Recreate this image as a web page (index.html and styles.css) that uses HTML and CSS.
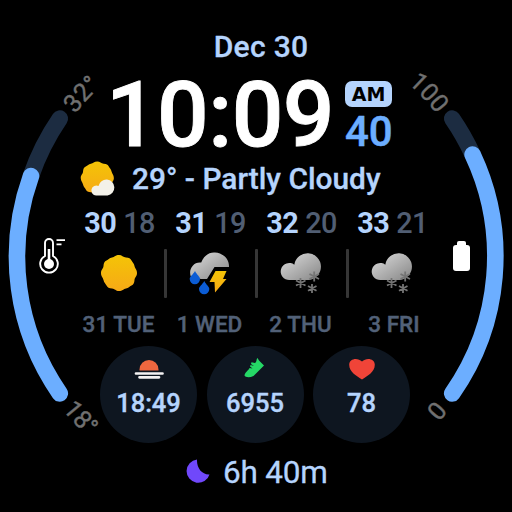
FILE: index.html
```html
<!DOCTYPE html>
<html lang="en">
<head>
<meta charset="utf-8">
<title>Watch face</title>
<link rel="stylesheet" href="styles.css">
</head>
<body>
<main class="face">
  <svg class="dial" viewBox="0 0 512 512">
    <defs>
      <path id="topLeft" d="M26 256A230 230 0 0 1 256 26"/>
      <path id="topRight" d="M256 26A230 230 0 0 1 486 256"/>
      <path id="bottomLeft" d="M9 256A247 247 0 0 0 256 503"/>
      <path id="bottomRight" d="M256 503A247 247 0 0 0 503 256"/>
    </defs>
    <path class="track" d="M59.8 118.6A239.5 239.5 0 0 0 31 175.8"/>
    <path class="level" d="M31 176A239.5 239.5 0 0 0 59.8 393.4"/>
    <path class="track" d="M452.2 118.6A239.5 239.5 0 0 1 472.6 154.5"/>
    <path class="level" d="M472.6 154.5A239.5 239.5 0 0 1 452.2 393.4"/>
    <text class="scale"><textPath href="#topLeft" startOffset="153">32°</textPath></text>
    <text class="scale"><textPath href="#topRight" startOffset="166">100</textPath></text>
    <text class="scale"><textPath href="#bottomLeft" startOffset="165.500">18°</textPath></text>
    <text class="scale"><textPath href="#bottomRight" startOffset="206">0</textPath></text>
  </svg>

  <div class="date">Dec 30</div>
  <section class="clock">
    <div class="time">10:09</div>
    <div class="side">
      <div class="ampm">AM</div>
      <div class="seconds">40</div>
    </div>
  </section>
  <section class="now">
    <svg class="now-icon" viewBox="0 0 36 36">
      <defs>
        <linearGradient id="sunFill" x1="0" y1="0" x2="0" y2="1"><stop offset="0" stop-color="#f4c406"/><stop offset="1" stop-color="#f6a916"/></linearGradient>
        <linearGradient id="cloudFill" x1="0" y1="0" x2="1" y2="1"><stop offset="0" stop-color="#dedede"/><stop offset="1" stop-color="#858585"/></linearGradient>
        <path id="sun" d="M0-18C3-18 4-15.700 7-15.500S11.500-14.500 12.500-12.500S15-9.500 15.500-7S18-3.500 18 0S15.700 4 15.500 7S14.500 11.500 12.500 12.500S9.500 15 7 15.500S3.500 18 0 18S-4 15.700-7 15.500S-11.500 14.500-12.500 12.500S-15 9.500-15.500 7S-18 3.500-18 0S-15.700-4-15.500-7S-14.500-11.500-12.500-12.500S-9.500-15-7-15.500S-3.500-18 0-18Z"/>
      </defs>
      <use href="#sun" transform="translate(17.300 17) scale(.92)" fill="url(#sunFill)"/>
      <path d="M16 34.500a5 5 0 1 1 2.500-9.500a8 8 0 1 1 9 9.500Z" fill="#f3f1e9"/>
    </svg>
    <span>29° - Partly Cloudy</span>
  </section>

  <section class="forecast">
    <div class="day">
      <div class="temps"><b>30</b><span>18</span></div>
      <svg class="sky" viewBox="0 0 48 48"><use href="#sun" transform="translate(23 24)" fill="url(#sunFill)"/></svg>
      <div class="name">31 TUE</div>
    </div>
    <div class="day">
      <div class="temps"><b>31</b><span>19</span></div>
      <svg class="sky" viewBox="0 0 48 48">
        <path d="M4 28C1 21 6 12.500 14.200 13.500C17 6 23 3 28 3.500C36 4 42.500 10 42 18H27.500L20 30H14Z" fill="url(#cloudFill)"/>
        <path d="M8 22c2 4 5 5.500 5 8a5.100 5.100 0 0 1-10.300 0c0-2.500 3-4 5.300-8ZM17.300 32c2 4 5 5.500 5 8a5.100 5.100 0 0 1-10.300 0c0-2.500 3-4 5.300-8Z" fill="#0b5cd5"/>
        <path d="M28.500 22H39.500L36 30H39.500L28 43.500L27.500 33H22.500Z" fill="url(#sunFill)"/>
      </svg>
      <div class="name">1 WED</div>
    </div>
    <div class="day">
      <div class="temps"><b>32</b><span>20</span></div>
      <svg class="sky" viewBox="0 0 48 48">
        <g id="snow">
          <path d="M11.500 31A8.500 8.500 0 1 1 16.300 15.700A13.400 13.400 0 1 1 31 31Z" fill="url(#cloudFill)"/>
          <path class="flakes" d="M36.200 22.500V32.500M31.500 25L41 30M41 25L31.500 30M22.500 29V39M18 31.500L27.500 36.500M27.500 31.500L18 36.500M34 35V44M30 37L38.500 41.800M38.500 37L30 41.800"/>
        </g>
      </svg>
      <div class="name">2 THU</div>
    </div>
    <div class="day">
      <div class="temps"><b>33</b><span>21</span></div>
      <svg class="sky" viewBox="0 0 48 48"><use href="#snow"/></svg>
      <div class="name last">3 FRI</div>
    </div>
  </section>

  <section class="stats">
    <div class="stat">
      <svg class="stat-icon" viewBox="0 0 32 24">
        <path d="M6.500 13.500V12.500a9.500 9.500 0 0 1 19 0V13.500Z" fill="#ef673f"/>
        <path d="M3 16.500H29.500M6.500 20.300H26" stroke="#f4f2f2" stroke-width="2.700" stroke-linecap="round"/>
      </svg>
      <div class="value">18:49</div>
    </div>
    <div class="stat">
      <svg class="stat-icon" viewBox="0 0 32 24">
        <path d="M5.500 18.500C6 15 9.500 13.500 10.500 11L13.500 11.500L11 9.500L11.500 8L15 9L12 7L12.500 5.300L16 6C18 5 17 2.500 18.500 1L20 3.500L25 8.500L14.500 19C10.500 20.800 6.500 20.500 5.500 18.500Z" fill="#25d866"/>
      </svg>
      <div class="value">6955</div>
    </div>
    <div class="stat">
      <svg class="stat-icon" viewBox="0 0 32 24">
        <path d="M16 22.500C11 19 3.200 15.500 3.200 7.800C3.200 1.500 11.500 0 16 4.500C20.500 0 28.800 1.500 28.800 7.800C28.800 15.500 21 19 16 22.500Z" fill="#f04438"/>
      </svg>
      <div class="value">78</div>
    </div>
  </section>

  <section class="sleep">
    <svg class="moon" viewBox="0 0 24 24"><path d="M11 .5A11.700 11.700 0 1 0 23.500 15.500C16 16 10.500 9 11 .5Z" fill="#7048fb"/></svg>
    <span>6h 40m</span>
  </section>

  <svg class="thermo" viewBox="0 0 28 38">
    <path d="M7 19V6a4 4 0 0 1 8 0V19a8.800 8.800 0 1 1-8 0Z" fill="none" stroke="#fff" stroke-width="1.900"/>
    <path d="M11 12V27" stroke="#fff" stroke-width="2.600"/>
    <circle cx="11" cy="27" r="5" fill="#fff"/>
    <path d="M18.500 3.200H27M18.500 7.300H23.500" stroke="#fff" stroke-width="1.800"/>
  </svg>
  <div class="battery"></div>
</main>
</body>
</html>
```
FILE: styles.css
```css
body {
  margin: 0;
  background: #000;
}

.face {
  position: relative;
  box-sizing: border-box;
  width: 512px;
  height: 512px;
  padding-top: 28px;
  overflow: hidden;
  background: #000;
  color: #b5d4fd;
  font-family: Roboto, "Liberation Sans", sans-serif;
  font-weight: 500;
  white-space: nowrap;
}

.dial {
  position: absolute;
  left: 0;
  top: 0;
  width: 512px;
  height: 512px;
}

.track,
.level {
  fill: none;
  stroke: #1c2c41;
  stroke-width: 16.6px;
  stroke-linecap: round;
}

.level {
  stroke: #6caeff;
}

.scale {
  font-size: 25px;
  font-weight: 400;
  fill: #707070;
  stroke: #707070;
  stroke-width: .4px;
}

.date {
  height: 36px;
  padding-left: 10px;
  font-size: 30px;
  letter-spacing: .3px;
  line-height: 37px;
  text-align: center;
  -webkit-text-stroke: .3px;
}

.clock {
  display: flex;
  height: 101px;
  padding-left: 106px;
}

.time {
  width: 239px;
  color: #fff;
  font-size: 91px;
  line-height: 103px;
  letter-spacing: -.6px;
  -webkit-text-stroke: .9px #fff;
}

.side {
  padding-top: 17px;
}

.ampm {
  width: 47px;
  height: 26px;
  border-radius: 7px;
  background: #b5d4fd;
  color: #000;
  font: bold 19px/26px "DejaVu Sans", sans-serif;
  text-align: center;
}

.seconds {
  color: #6caeff;
  font-size: 42px;
  line-height: 50px;
  -webkit-text-stroke: .5px;
}

.now {
  display: flex;
  gap: 16px;
  height: 27px;
  padding-left: 80px;
  font-size: 29.9px;
  line-height: 27px;
  -webkit-text-stroke: .3px;
}

.now-icon {
  width: 36px;
  height: 36px;
  margin-top: -4px;
}

.forecast {
  display: grid;
  grid-template-columns: repeat(4, 91px);
  margin: 14px 0 0 74px;
}

.day {
  position: relative;
  display: flex;
  flex-direction: column;
  align-items: center;
}

.day + .day::before {
  content: "";
  position: absolute;
  left: -1px;
  top: 43px;
  width: 3px;
  height: 49px;
  border-radius: 1px;
  background: #363636;
}

.temps {
  display: flex;
  gap: 7px;
  height: 34px;
  font-size: 28.8px;
  letter-spacing: -.6px;
  line-height: 35px;
}

.temps b {
  font-weight: 700;
}

.temps span {
  color: #515e73;
  font-weight: 500;
}

.sky {
  width: 48px;
  height: 48px;
  margin: 9px 0 0 1px;
}

.flakes {
  fill: none;
  stroke: #747474;
  stroke-width: 1.8px;
}

.name {
  height: 30px;
  margin-top: 12px;
  padding-right: 2px;
  color: #526178;
  font-size: 22.5px;
  line-height: 30px;
  -webkit-text-stroke: .4px;
}

.name.last {
  padding: 0 0 0 3px;
}

.stats {
  display: flex;
  gap: 9.5px;
  margin: 7px 0 0 100px;
}

.stat {
  display: flex;
  flex-direction: column;
  align-items: center;
  width: 97px;
  height: 97px;
  border-radius: 50%;
  background: #0e1620;
}

.stat-icon {
  width: 32px;
  height: 24px;
  margin-top: 11px;
}

.value {
  margin-top: 7px;
  font-size: 25.5px;
  line-height: 30px;
  -webkit-text-stroke: .4px;
}

.sleep {
  display: flex;
  gap: 13px;
  margin: 11px 0 0 186px;
  font-size: 31.5px;
  font-weight: 400;
  letter-spacing: -.2px;
  line-height: 38px;
  -webkit-text-stroke: .3px;
}

.moon {
  width: 24px;
  height: 24px;
  margin-top: 5px;
}

.thermo {
  position: absolute;
  left: 38px;
  top: 237px;
  width: 28px;
  height: 38px;
}

.battery {
  position: absolute;
  left: 453px;
  top: 245px;
  width: 17px;
  height: 26px;
  border-radius: 3px;
  background: #fff;
}

.battery::before {
  content: "";
  position: absolute;
  left: 4px;
  top: -4px;
  width: 9px;
  height: 5px;
  border-radius: 2px 2px 0 0;
  background: #fff;
}
```
